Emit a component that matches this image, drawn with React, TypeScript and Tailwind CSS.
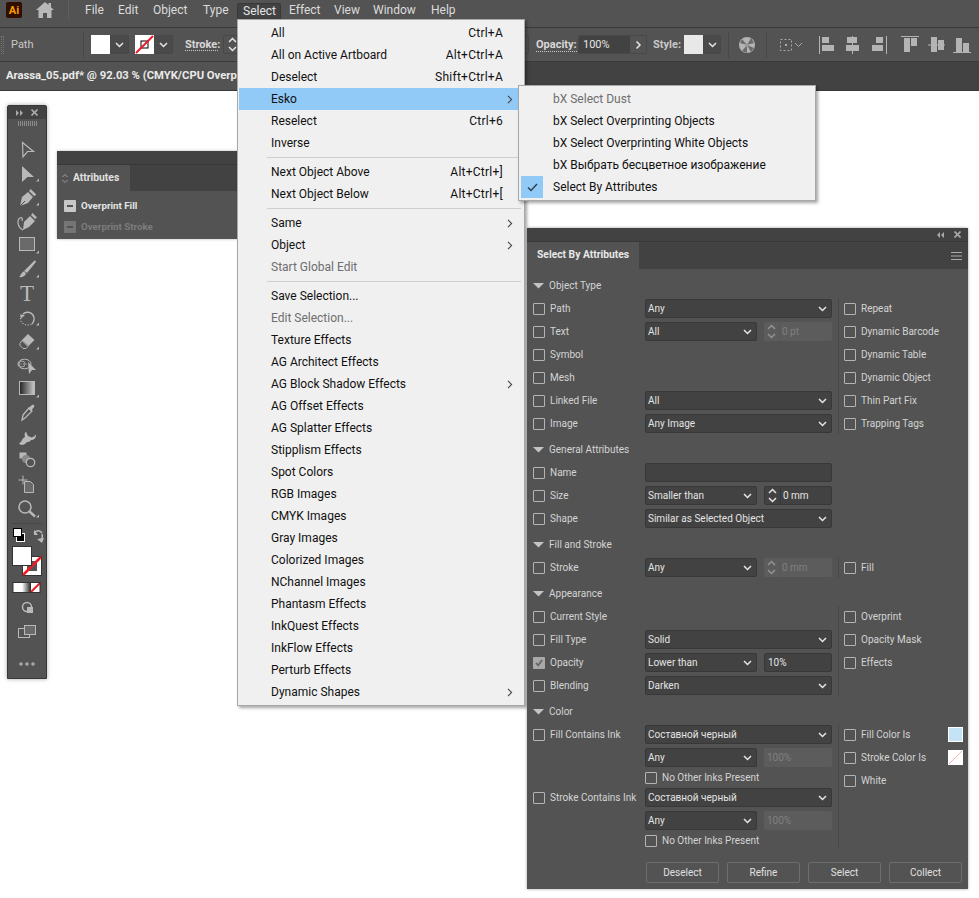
import React from "react";

const Chevron = ({ className = "" }: { className?: string }) => (
  <svg width="9" height="6" viewBox="0 0 9 6" className={className}>
    <path d="M1 1l3.5 3.5L8 1" fill="none" stroke="#e6e6e6" strokeWidth="1.5" />
  </svg>
);

const Arrow = () => (
  <svg width="6" height="9" viewBox="0 0 6 9" className="absolute right-[10px] top-[7px]">
    <path d="M1 .8L4.6 4.5 1 8.2" fill="none" stroke="#444" strokeWidth="1.1" />
  </svg>
);

const Check = ({ label, checked = false }: { label?: string; checked?: boolean }) => (
  <div className="flex items-center gap-[5px]">
    <span
      className={
        checked
          ? "flex h-3 w-3 shrink-0 items-center justify-center rounded-[1px] bg-[#a8a8a8]"
          : "h-3 w-3 shrink-0 rounded-[1px] border border-[#b4b4b4]"
      }
    >
      {checked && (
        <svg width="10" height="10" viewBox="0 0 10 10">
          <path d="M2 5l2.2 2.4L8 2" fill="none" stroke="#666" strokeWidth="1.8" />
        </svg>
      )}
    </span>
    {label && <span className="whitespace-nowrap">{label}</span>}
  </div>
);

const Select = ({ value, half = false }: { value: string; half?: boolean }) => (
  <div
    className={
      (half ? "w-[112px]" : "w-[187px]") +
      " flex h-[19px] shrink-0 items-center justify-between rounded-[2px] border border-[#383838] bg-[#424242] pl-[2px] pr-[4px] text-[#e4e4e4]"
    }
  >
    <span className="whitespace-nowrap">{value}</span>
    <Chevron />
  </div>
);

const Stepper = ({ value, disabled = false }: { value: string; disabled?: boolean }) => (
  <div
    className={
      (disabled ? "bg-[#5c5c5c] text-[#808080]" : "border border-[#383838] bg-[#424242] text-[#e4e4e4]") +
      " ml-[7px] flex h-[19px] w-[68px] shrink-0 items-center rounded-[2px]"
    }
  >
    <span className={(disabled ? "border-[#505050] opacity-40" : "border-[#383838]") + " flex h-full w-4 shrink-0 flex-col items-center justify-center gap-[3px] border-r"}>
      <Chevron className="rotate-180" />
      <Chevron />
    </span>
    <span className="pl-[2px]">{value}</span>
  </div>
);

const Input = ({ value, half = false }: { value: string; half?: boolean }) => (
  <div
    className={
      (half ? "ml-[7px] w-[68px] pl-[3px]" : "w-[187px]") +
      " flex h-[19px] shrink-0 items-center rounded-[2px] border border-[#383838] bg-[#424242] text-[#e4e4e4]"
    }
  >
    {value}
  </div>
);

const Row = ({ label, checked, children, h = "h-[23px]" }: { label?: string; checked?: boolean; children?: React.ReactNode; h?: string }) => (
  <div className={h + " flex items-center"}>
    <div className="w-[112px] shrink-0">{label && <Check label={label} checked={checked} />}</div>
    {children}
  </div>
);

const Heading = ({ label, first = false }: { label: string; first?: boolean }) => (
  <div className={(first ? "" : "mt-1 ") + "flex h-[22px] items-center"}>
    <svg width="12" height="6" viewBox="0 0 12 6" className="mr-[4px]">
      <path d="M0 0h11L5.5 5.5z" fill="#c4c4c4" />
    </svg>
    <span>{label}</span>
  </div>
);

const Section = ({ left, right }: { left: React.ReactNode; right?: React.ReactNode }) => (
  <div className="flex">
    <div className="w-[305px] shrink-0">{left}</div>
    {right && (
      <>
        <div className="my-[1px] w-px shrink-0 bg-[#484848]" />
        <div className="flex-1 pl-[5px]">{right}</div>
      </>
    )}
  </div>
);

const RightRow = ({ label, children }: { label: string; children?: React.ReactNode }) => (
  <div className="flex h-[23px] items-center justify-between pr-[5px]">
    <Check label={label} />
    {children}
  </div>
);

const MenuRow = ({ label, sc, arrow, dim, active }: { label: string; sc?: string; arrow?: boolean; dim?: boolean; active?: boolean }) => (
  <div className={(active ? "bg-[#91c9f7] " : "") + "relative flex h-[22px] items-center justify-between pl-[32px] pr-[20px]"}>
    <span className={dim ? "text-[#6e6e6e]" : "text-[#111]"}>{label}</span>
    {sc && <span className="tracking-[0.25px] text-[#111]">{sc}</span>}
    {arrow && <Arrow />}
  </div>
);

const Sep = () => <div className="my-[3px] ml-[28px] mr-[2px] h-px bg-[#cfcfcf]" />;

const Corner = () => <path d="M21 20.5h3v-3z" fill="#b4b4b4" />;

const g = "#b9b9b9";
const tools: React.ReactNode[] = [
  <path d="M7.5 5.5L18.5 14.5H12.5L8 20Z" fill="none" stroke={g} strokeWidth="1.2" />,
  <><path d="M7 5L19 16H12.5L7 21Z" fill={g} /><Corner /></>,
  <><path d="M5 21L7 12 13 7 18 12 13 18ZM14 6l1.8-2 5.5 5.5-2 1.8Z" fill={g} /><path d="M5 21l5-5" stroke="#535353" /><Corner /></>,
  <><path d="M8 21L9 13 15 7 20 12 14 18ZM16 6l1.600-2 4.400 4.400-2 1.600Z" fill={g} /><path d="M8 21C2 18 2 11 5 9c2-1 3 1 2 3" fill="none" stroke={g} strokeWidth="1.200" /></>,
  <><rect x="4.500" y="4.500" width="15" height="13" fill="#6a6a6a" stroke={g} /><Corner /></>,
  <><path d="M9 14L19 4c1.500-1 2.500 0 1.500 1.500L12 16ZM9 14.500l2 2C10 20 6 20.500 4 20c2-1 2-5 5-5.500Z" fill={g} /><Corner /></>,
  null,
  <><path d="M8 9c3-3 8-2 10 1s1 7-1 9" fill="none" stroke={g} strokeWidth="1.4" /><path d="M16.500 19c-3 2-8 1-10-2-1-1-1-3-1-4" fill="none" stroke={g} strokeDasharray="1.2 1.6" strokeWidth="1.2" /><path d="M5 9.500l5 .5-4 3.500Z" fill={g} /><Corner /></>,
  <><path d="M13 5l6.500 6-6 6-6.500-6Z" fill={g} /><path d="M7 11.500l6 6-2 2H8l-3-3v-2Z" fill="none" stroke={g} /><Corner /></>,
  <><ellipse cx="9.500" cy="11" rx="6.500" ry="4.800" fill="none" stroke={g} /><circle cx="7" cy="11" r="3" fill="none" stroke={g} strokeWidth=".8" /><path d="M3 11h9" stroke={g} strokeDasharray="1 1.500" /><path d="M13 9L21 17H17L14 21Z" fill={g} /></>,
  <><rect x="4.500" y="4.500" width="15" height="13" fill="url(#gr)" stroke={g} /><Corner /></>,
  <><path d="M8 14l6-7 3 3-7 7-3 2Z" fill="none" stroke={g} strokeWidth="1.3" /><path d="M13 7.500l4-3.500c2-1 3 1 2 2l-3 4Z" fill={g} /></>,
  <><path d="M4 18c3 0 2-4 6-6-1-3 0-5 1-5 1 1 1 3 2 4 3 1 3 2 5 1 2 0 2-3 3-2 0 3-2 5-5 5-1 2-3 2-4 2-1 1-3 3-5 3-1 0-3-1-3-2Z" fill={g} /></>,
  <><rect x="4.500" y="3.500" width="7" height="6" fill={g} /><circle cx="11" cy="10" r="4" fill="#8a8a8a" /><circle cx="15.500" cy="13.500" r="4.200" fill="#535353" stroke={g} strokeWidth="1.300" /></>,
  <><path d="M9.500 8.500h6l3 3v8h-9Z" fill="#6a6a6a" stroke={g} /><path d="M8 2.500v9M3.500 7h9" stroke={g} /></>,
  <><circle cx="10" cy="10" r="6" fill="none" stroke={g} strokeWidth="1.500" /><path d="M14.500 14.500l5.500 5" stroke={g} strokeWidth="2.400" /><Corner /></>,
];

const Tool = ({ children }: { children: React.ReactNode }) => (
  <div className="flex h-6 items-center justify-center">
    <svg width="24" height="24" viewBox="0 0 24 24">{children}</svg>
  </div>
);

const AlignIcon = ({ w, className = "", children }: { w: number; className?: string; children: React.ReactNode }) => (
  <svg width={w} height="18" viewBox={`0 0 ${w} 18`} className={"shrink-0 " + className}>
    <g fill="#b4b4b4" stroke="none">{children}</g>
  </svg>
);

const Line = ({ d }: { d: string }) => <path d={d} stroke="#b4b4b4" fill="none" />;

export default function App() {
  return (
    <div className="relative h-[898px] w-[979px] overflow-hidden bg-white font-['Roboto',sans-serif] text-[12px] leading-none">
      <svg width="0" height="0" className="absolute">
        <defs>
          <linearGradient id="gr" x1="0" x2="1">
            <stop offset="0" stopColor="#222" />
            <stop offset="1" stopColor="#ccc" />
          </linearGradient>
          <linearGradient id="mode" x1="0" x2="1">
            <stop offset="0" stopColor="#fff" />
            <stop offset="1" stopColor="#222" />
          </linearGradient>
        </defs>
      </svg>

      {/* Menu bar */}
      <div className="flex h-[28px] items-start border-b border-[#3a3a3a] bg-[#535353] pt-[2px] text-[#dcdcdc]">
        <div className="ml-[6px] flex h-4 w-4 items-center justify-center rounded-[2px] bg-[#2e0f00] text-[11px] font-bold text-[#ff9a00]">Ai</div>
        <svg width="18" height="16" viewBox="0 0 18 16" className="ml-[14px]">
          <path d="M9 0L0 8h2.500v8h4.500v-5h4v5h4.500V8H18l-3-2.700V1h-2.500v2Z" fill="#b9b9b9" />
        </svg>
        <div className="-mt-[2px] ml-[14px] h-[20px] w-px bg-[#5e5e5e]" />
        <div className="ml-[10px] flex h-4 items-center">
          <span className="w-[33px] pl-[6px]">File</span>
          <span className="w-[35px] pl-[6px]">Edit</span>
          <span className="w-[50px] pl-[6px]">Object</span>
          <span className="w-[40px] pl-[6px]">Type</span>
          <span className="mr-[2px] mt-[2px] flex h-[16px] w-[44px] items-center rounded-t-[2px] border border-b-0 border-[#383838] bg-[#424242] pb-[2px] pl-[5px] text-[#e4e4e4]">Select</span>
          <span className="w-[45px] pl-[6px]">Effect</span>
          <span className="w-[39px] pl-[6px]">View</span>
          <span className="w-[58px] pl-[6px]">Window</span>
          <span className="w-[40px] pl-[6px]">Help</span>
        </div>
      </div>

      {/* Control bar */}
      <div className="flex h-[34px] items-center border-b border-[#3a3a3a] bg-[#535353] text-[11px] text-[#c8c8c8]">
        <div className="ml-[1px] h-[18px] w-[3px] border-x border-dotted border-[#777]" />
        <span className="ml-[7px] w-[72px]">Path</span>
        <div className="h-[26px] w-px bg-[#484848]" />
        <div className="ml-[7px] h-[19px] w-[19px] bg-white" />
        <div className="flex h-[19px] w-[19px] items-center justify-center rounded-r-[2px] border border-[#484848] bg-[#4a4a4a]"><Chevron /></div>
        <svg width="19" height="19" viewBox="0 0 19 19" className="ml-[6px]">
          <rect width="19" height="19" fill="#fff" />
          <rect x="6" y="6" width="7" height="7" fill="#fff" stroke="#000" />
          <path d="M1 18L18 1" stroke="#e8192c" strokeWidth="2" />
        </svg>
        <div className="flex h-[19px] w-[19px] items-center justify-center rounded-r-[2px] border border-[#484848] bg-[#4a4a4a]"><Chevron /></div>
        <span className="ml-[12px] w-[33px] whitespace-nowrap border-b border-dotted border-[#c8c8c8] font-bold text-[#d8d8d8]">Stroke:</span>
        <div className="ml-[5px] mr-[7px] flex h-[19px] w-[306px] shrink-0 items-center rounded-[2px] border border-[#484848]">
          <div className="flex w-[16px] flex-col items-center gap-[3px]"><Chevron className="rotate-180" /><Chevron /></div>
        </div>
        <span className="w-[42px] shrink-0 whitespace-nowrap font-bold text-[#d8d8d8]"><span className="border-b border-dotted border-[#c8c8c8]">Opacity:</span></span>
        <div className="flex h-[19px] w-[69px] shrink-0 items-center rounded-[2px] border border-[#484848]">
          <div className="flex h-full w-[51px] items-center bg-[#424242] pl-[4px] text-[#e4e4e4]">100%</div>
          <div className="flex flex-1 items-center justify-center"><Chevron className="-rotate-90" /></div>
        </div>
        <span className="ml-[6px] w-[31px] shrink-0 font-bold">Style:</span>
        <div className="h-[19px] w-[19px] shrink-0 bg-[#e8e8e8]" />
        <div className="flex h-[19px] w-[18px] shrink-0 items-center justify-center rounded-r-[2px] border border-[#484848] bg-[#4a4a4a]"><Chevron /></div>
        <div className="ml-[7px] h-[26px] w-px shrink-0 bg-[#484848]" />
        <svg width="16" height="16" viewBox="0 0 16 16" className="ml-[10px] shrink-0">
          <circle cx="8" cy="8" r="8" fill="#b4b4b4" />
          <path d="M8 8L3 2 1 6ZM8 8L15 6 12 1ZM8 8L3 14 8 16ZM8 8L15 11 12 15Z" fill="#6c6c6c" />
          <circle cx="8" cy="8" r="2" fill="#999" />
        </svg>
        <div className="ml-[11px] h-[26px] w-px shrink-0 bg-[#484848]" />
        <svg width="24" height="16" viewBox="0 0 24 16" className="ml-[12px] shrink-0">
          <rect x="1.500" y="2.500" width="11" height="11" fill="none" stroke="#aaa" strokeDasharray="2 2" />
          <rect x="6" y="7" width="2" height="2" fill="#aaa" />
          <path d="M16 6l3.500 3.500L23 6" fill="none" stroke="#aaa" />
        </svg>
        <AlignIcon w={16} className="ml-[16px]"><Line d="M.5 0v18" /><rect x="3" y="1" width="7" height="6" /><rect x="3" y="9" width="12" height="6" /></AlignIcon>
        <AlignIcon w={14} className="ml-[11px]"><Line d="M6.500 0v18" /><rect x="1" y="1" width="10" height="6" /><rect x="0" y="9" width="13" height="6" /></AlignIcon>
        <AlignIcon w={16} className="ml-[12px]"><Line d="M14.500 0v18" /><rect x="4" y="1" width="7" height="6" /><rect x="0" y="9" width="11" height="6" /></AlignIcon>
        <AlignIcon w={18} className="ml-[13px]"><Line d="M0 .5h18" /><rect x="3" y="2" width="6" height="14" /><rect x="10" y="2" width="6" height="8" /></AlignIcon>
        <AlignIcon w={17} className="ml-[9px]"><Line d="M0 9h17" /><rect x="3" y="1" width="6" height="15" /><rect x="10" y="4" width="6" height="10" /></AlignIcon>
        <AlignIcon w={18} className="ml-[8px]"><Line d="M0 16.500h18" /><rect x="3" y="2" width="6" height="14" /><rect x="10" y="7" width="6" height="9" /></AlignIcon>
      </div>

      {/* Document tabs */}
      <div className="flex h-[29px] items-center border-b border-[#3a3a3a] bg-[#424242]">
        <div className="flex h-full w-[400px] items-center bg-[#535353] pl-[6px] text-[11.25px] font-bold text-[#eaeaea]">
          <span className="whitespace-nowrap">Arassa_05.pdf* @ 92.03 % (CMYK/CPU Overp</span>
        </div>
      </div>

      {/* Tools panel */}
      <div className="absolute left-[7px] top-[105px] h-[574px] w-10 rounded-t-[2px] border border-[#383838] bg-[#535353] shadow-[0_0_4px_rgba(0,0,0,0.35)]">
        <div className="flex h-[13px] items-center justify-between bg-[#424242] px-[8px]">
          <svg width="8" height="6" viewBox="0 0 8 6"><path d="M0 0l3 3-3 3ZM4 0l3 3-3 3Z" fill="#aaa" /></svg>
          <svg width="7" height="7" viewBox="0 0 7 7"><path d="M.5.500l6 6M6.500.500l-6 6" stroke="#aaa" strokeWidth="1.600" /></svg>
        </div>
        <div className="mx-auto mt-[2px] h-[5px] w-[19px] bg-[repeating-linear-gradient(90deg,#8c8c8c_0,#8c8c8c_1px,transparent_1px,transparent_2px)]" />
        <div className="mt-[11px]">
          {tools.map((t, i) =>
            t === null ? (
              <div key={i} className="flex h-6 items-center justify-center font-['Liberation_Serif',serif] text-[23px] text-[#b9b9b9]">T</div>
            ) : (
              <Tool key={i}>{t}</Tool>
            )
          )}
        </div>
        <div className="mx-[4px] mt-[2px] h-px bg-[#474747]" />
        <svg width="38" height="146" viewBox="0 0 38 146" className="mt-[1px]">
          <rect x="8.500" y="8.500" width="8" height="8" fill="#000" stroke="#fff" />
          <rect x="5.500" y="3.500" width="8" height="8" fill="#fff" stroke="#000" />
          <path d="M26 8c3-3 6-3 8 0M34 9c1 3 0 5-2 7" fill="none" stroke="#b9b9b9" strokeWidth="1.500" />
          <path d="M26 5v5h4ZM29 14l5 4 2-5Z" fill="#b9b9b9" />
          <rect x="14.500" y="31.500" width="19" height="19" fill="#fff" stroke="#333" />
          <rect x="19" y="36" width="10" height="10" fill="#535353" />
          <path d="M15 50L33 32" stroke="#ed1c24" strokeWidth="2.500" />
          <rect x="4.500" y="21.500" width="19" height="19" fill="#fff" stroke="#333" />
          <rect x="5" y="58" width="9" height="9" fill="#fff" />
          <rect x="14" y="58" width="9" height="9" fill="url(#mode)" />
          <rect x="23" y="58" width="9" height="9" fill="#fff" />
          <path d="M23 67l9-9" stroke="#ed1c24" strokeWidth="2" />
          <rect x="5" y="57.500" width="27" height="10" fill="none" stroke="#333" />
          <circle cx="19" cy="82" r="4.500" fill="none" stroke="#b9b9b9" strokeWidth="1.500" />
          <rect x="19" y="82" width="6" height="6" fill="#b9b9b9" />
          <rect x="10.500" y="103.500" width="11" height="9" fill="none" stroke="#b9b9b9" />
          <rect x="16.500" y="100.500" width="11" height="9" fill="#6a6a6a" stroke="#b9b9b9" />
          <circle cx="13" cy="139" r="1.800" fill="#a8a8a8" />
          <circle cx="19" cy="139" r="1.800" fill="#a8a8a8" />
          <circle cx="25" cy="139" r="1.800" fill="#a8a8a8" />
        </svg>
      </div>

      {/* Attributes panel */}
      <div className="absolute left-[57px] top-[151px] h-[88px] w-[300px] rounded-t-[2px] bg-[#535353] shadow-[0_0_3px_rgba(0,0,0,0.3)]">
        <div className="h-[13px] bg-[#424242]" />
        <div className="flex h-[27px] border-t border-[#383838] bg-[#424242]">
          <div className="flex w-[73px] items-center bg-[#535353] pl-[5px] text-[10.3px] font-bold text-[#e0e0e0]">
            <svg width="6" height="11" viewBox="0 0 6 11" className="mr-[5px]"><path d="M.5 4L3 1.500 5.500 4M.5 7L3 9.500 5.500 7" fill="none" stroke="#a0a0a0" /></svg>
            Attributes
          </div>
        </div>
        <div className="flex h-[26px] items-center pl-[7px] pt-[4px] text-[9.75px] font-bold text-[#e4e4e4]">
          <span className="mr-[5px] flex h-3 w-3 items-center justify-center rounded-[1px] bg-[#c8c8c8]"><span className="h-[2px] w-[6px] bg-[#535353]" /></span>
          Overprint Fill
        </div>
        <div className="flex h-[20px] items-center pl-[7px] text-[9.75px] font-bold text-[#7c7c7c]">
          <span className="mr-[5px] flex h-3 w-3 items-center justify-center rounded-[1px] bg-[#757575]"><span className="h-[2px] w-[6px] bg-[#535353]" /></span>
          Overprint Stroke
        </div>
      </div>

      {/* Select menu */}
      <div className="absolute left-[237px] top-[19px] w-[288px] border border-[#a8a8a8] bg-[#f0f0f0] p-[1px] py-[2px] shadow-[2px_2px_3px_rgba(0,0,0,0.35)]">
        <MenuRow label="All" sc="Ctrl+A" />
        <MenuRow label="All on Active Artboard" sc="Alt+Ctrl+A" />
        <MenuRow label="Deselect" sc="Shift+Ctrl+A" />
        <MenuRow label="Esko" arrow active />
        <MenuRow label="Reselect" sc="Ctrl+6" />
        <MenuRow label="Inverse" />
        <Sep />
        <MenuRow label="Next Object Above" sc="Alt+Ctrl+]" />
        <MenuRow label="Next Object Below" sc="Alt+Ctrl+[" />
        <Sep />
        <MenuRow label="Same" arrow />
        <MenuRow label="Object" arrow />
        <MenuRow label="Start Global Edit" dim />
        <Sep />
        <MenuRow label="Save Selection..." />
        <MenuRow label="Edit Selection..." dim />
        <MenuRow label="Texture Effects" />
        <MenuRow label="AG Architect Effects" />
        <MenuRow label="AG Block Shadow Effects" arrow />
        <MenuRow label="AG Offset Effects" />
        <MenuRow label="AG Splatter Effects" />
        <MenuRow label="Stipplism Effects" />
        <MenuRow label="Spot Colors" />
        <MenuRow label="RGB Images" />
        <MenuRow label="CMYK Images" />
        <MenuRow label="Gray Images" />
        <MenuRow label="Colorized Images" />
        <MenuRow label="NChannel Images" />
        <MenuRow label="Phantasm Effects" />
        <MenuRow label="InkQuest Effects" />
        <MenuRow label="InkFlow Effects" />
        <MenuRow label="Perturb Effects" />
        <MenuRow label="Dynamic Shapes" arrow />
      </div>

      {/* Esko submenu */}
      <div className="absolute left-[518px] top-[85px] w-[298px] border border-[#a8a8a8] bg-[#f0f0f0] py-[2px] pl-[2px] shadow-[2px_2px_3px_rgba(0,0,0,0.35)]">
        <MenuRow label="bX Select Dust" dim />
        <MenuRow label="bX Select Overprinting Objects" />
        <MenuRow label="bX Select Overprinting White Objects" />
        <MenuRow label="bX Выбрать бесцветное изображение" />
        <div className="relative flex h-[22px] items-center pl-[32px] text-[#111]">
          <span className="absolute left-0 top-0 flex h-[22px] w-[22px] items-center justify-center bg-[#91c9f7]">
            <svg width="11" height="9" viewBox="0 0 11 9"><path d="M1 4.500l3 3L10 1" fill="none" stroke="#2d3d4a" strokeWidth="1.400" /></svg>
          </span>
          Select By Attributes
        </div>
      </div>

      {/* Select By Attributes panel */}
      <div className="absolute left-[527px] top-[228px] h-[661px] w-[441px] rounded-t-[2px] bg-[#535353] text-[10px] text-[#d4d4d4] shadow-[0_0_3px_rgba(0,0,0,0.4)]">
        <div className="flex h-[14px] items-center justify-end gap-[9px] border-b border-[#383838] bg-[#424242] pr-[7px]">
          <svg width="8" height="6" viewBox="0 0 8 6"><path d="M3 0L0 3l3 3ZM7 0L4 3l3 3Z" fill="#aaa" /></svg>
          <svg width="7" height="7" viewBox="0 0 7 7"><path d="M.5.500l6 6M6.500.500l-6 6" stroke="#aaa" strokeWidth="1.600" /></svg>
        </div>
        <div className="flex h-[27px] items-center justify-between bg-[#424242]">
          <div className="flex h-full w-[112px] items-center bg-[#535353] pl-[10px] text-[10.3px] font-bold text-[#e8e8e8]">Select By Attributes</div>
          <svg width="11" height="8" viewBox="0 0 11 8" className="mr-[6px]"><path d="M0 .5h11M0 4h11M0 7.500h11" stroke="#aaa" /></svg>
        </div>
        <div className="pl-[6px] pt-[6px]">
          <Heading label="Object Type" first />
          <Section
            left={
              <>
                <Row label="Path"><Select value="Any" /></Row>
                <Row label="Text"><Select value="All" half /><Stepper value="0 pt" disabled /></Row>
                <Row label="Symbol" />
                <Row label="Mesh" />
                <Row label="Linked File"><Select value="All" /></Row>
                <Row label="Image"><Select value="Any Image" /></Row>
              </>
            }
            right={
              <>
                <RightRow label="Repeat" />
                <RightRow label="Dynamic Barcode" />
                <RightRow label="Dynamic Table" />
                <RightRow label="Dynamic Object" />
                <RightRow label="Thin Part Fix" />
                <RightRow label="Trapping Tags" />
              </>
            }
          />
          <Heading label="General Attributes" />
          <Section
            left={
              <>
                <Row label="Name"><Input value="" /></Row>
                <Row label="Size"><Select value="Smaller than" half /><Stepper value="0 mm" /></Row>
                <Row label="Shape"><Select value="Similar as Selected Object" /></Row>
              </>
            }
          />
          <Heading label="Fill and Stroke" />
          <Section
            left={<Row label="Stroke"><Select value="Any" half /><Stepper value="0 mm" disabled /></Row>}
            right={<RightRow label="Fill" />}
          />
          <Heading label="Appearance" />
          <Section
            left={
              <>
                <Row label="Current Style" />
                <Row label="Fill Type"><Select value="Solid" /></Row>
                <Row label="Opacity" checked><Select value="Lower than" half /><Input value="10%" half /></Row>
                <Row label="Blending"><Select value="Darken" /></Row>
              </>
            }
            right={
              <>
                <RightRow label="Overprint" />
                <RightRow label="Opacity Mask" />
                <RightRow label="Effects" />
              </>
            }
          />
          <Heading label="Color" />
          <Section
            left={
              <>
                <Row label="Fill Contains Ink"><Select value="Составной черный" /></Row>
                <Row><Select value="Any" half /><div className="ml-[7px] flex h-[19px] w-[68px] items-center rounded-[2px] bg-[#5c5c5c] pl-[3px] text-[#808080]">100%</div></Row>
                <Row h="h-[17px]"><Check label="No Other Inks Present" /></Row>
                <Row label="Stroke Contains Ink"><Select value="Составной черный" /></Row>
                <Row><Select value="Any" half /><div className="ml-[7px] flex h-[19px] w-[68px] items-center rounded-[2px] bg-[#5c5c5c] pl-[3px] text-[#808080]">100%</div></Row>
                <Row h="h-[17px]"><Check label="No Other Inks Present" /></Row>
              </>
            }
            right={
              <>
                <RightRow label="Fill Color Is"><span className="h-[15px] w-[15px] border border-white bg-[#c5e3f7]" /></RightRow>
                <RightRow label="Stroke Color Is">
                  <svg width="15" height="15" viewBox="0 0 15 15"><rect width="15" height="15" fill="#fff" /><path d="M1 14L14 1" stroke="#f5b5b5" /></svg>
                </RightRow>
                <RightRow label="White" />
              </>
            }
          />
          <div className="mt-[13px] flex gap-[8px] pl-[113px]">
            {["Deselect", "Refine", "Select", "Collect"].map((b) => (
              <div key={b} className="flex h-[21px] w-[73px] items-center justify-center rounded-[2px] border border-[#6e6e6e] text-[#e0e0e0]">{b}</div>
            ))}
          </div>
        </div>
      </div>
    </div>
  );
}
